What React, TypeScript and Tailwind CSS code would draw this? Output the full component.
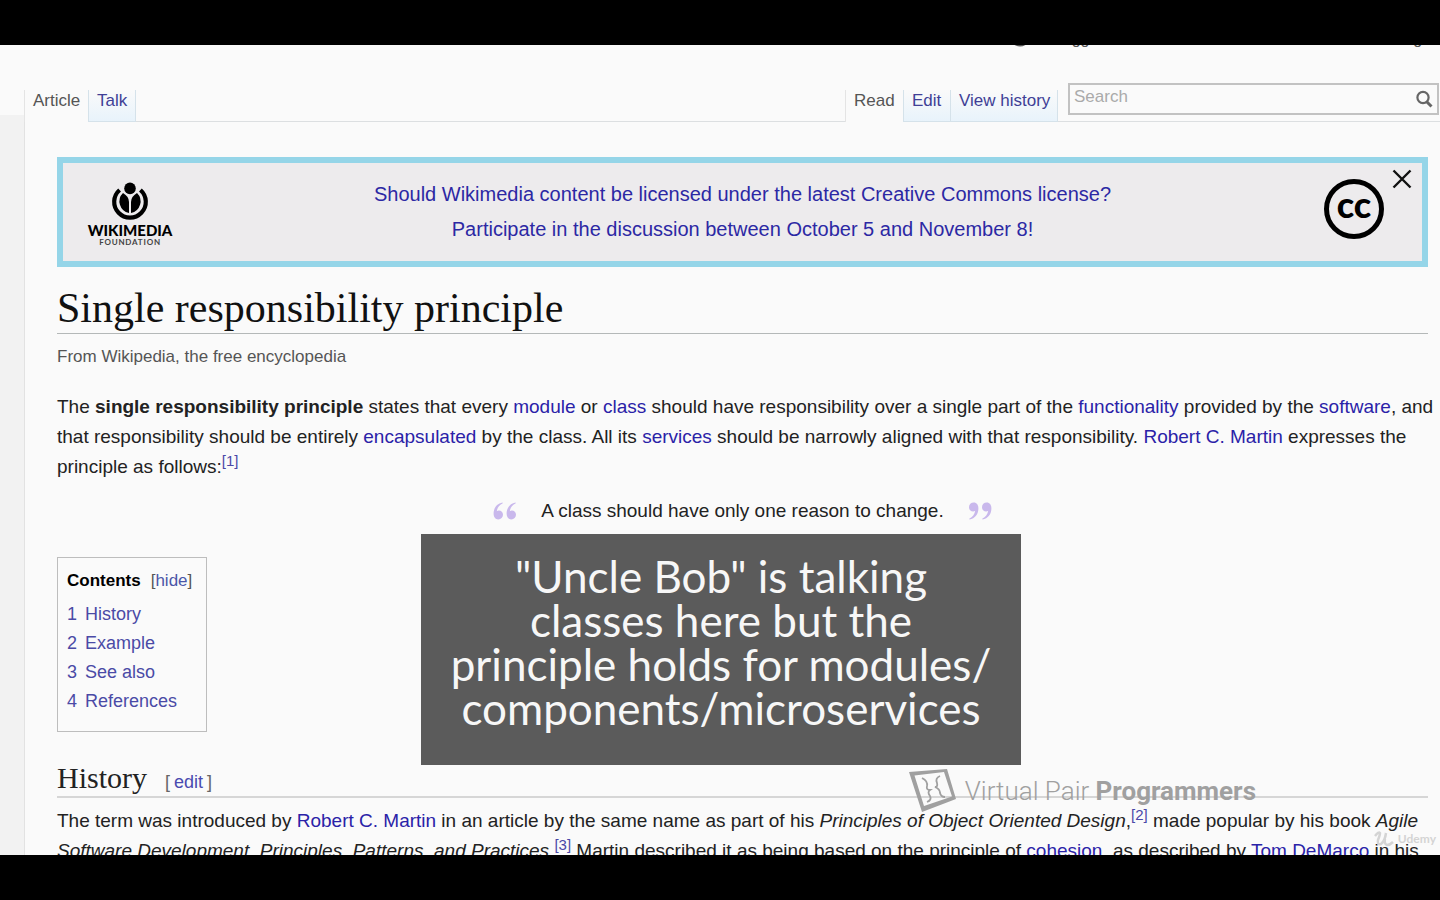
import type { ReactNode } from "react";

function WikiLink({ children }: { children: ReactNode }) {
  return (
    <a href="#" className="text-[#2a22a8]">
      {children}
    </a>
  );
}

function Ref({ n }: { n: number }) {
  return (
    <sup className="text-[15px] leading-none">
      <a href="#" className="text-[#4a48a8]">
        [{n}]
      </a>
    </sup>
  );
}

function WikimediaLogo() {
  return (
    <div className="flex w-24 flex-col items-center text-black">
      <svg viewBox="0 0 38 38" className="h-[38px] w-[38px]" aria-hidden="true">
        <circle cx="19" cy="6.4" r="5.8" />
        <path d="M8.6 8A15.8 15.8 0 1 0 29.4 8" fill="none" stroke="currentColor" strokeWidth="4.2" />
        <path d="M12 11 Q18 14.5 18 20 V31 A11.8 11.8 0 0 1 12 11Z" />
        <path d="M26 11 Q20 14.5 20 20 V31 A11.8 11.8 0 0 0 26 11Z" />
      </svg>
      <span className="mt-0.5 text-[15px] leading-4 font-black">WIKIMEDIA</span>
      <span className="text-[8px] leading-2 font-bold tracking-widest text-[#444]">FOUNDATION</span>
    </div>
  );
}

function Quote({ flip = false }: { flip?: boolean }) {
  return (
    <svg viewBox="0 0 24 18" className={flip ? "h-[18px] w-6 rotate-180" : "h-[18px] w-6"} fill="#c9b8ec" aria-hidden="true">
      <path d="M9.5 0.6 C4 1.6 0.6 6 0.6 11.6 C0.6 15.2 2.4 17.4 5.2 17.4 C8 17.4 10 15.5 10 12.8 C10 10.2 8.2 8.6 5.9 8.6 C5 8.6 4.4 8.8 3.8 9.2 C4.4 5.6 6.4 2.8 9.8 1.3Z" />
      <path d="M22.5 0.6 C17 1.6 13.6 6 13.6 11.6 C13.6 15.2 15.4 17.4 18.2 17.4 C21 17.4 23 15.5 23 12.8 C23 10.2 21.2 8.6 18.9 8.6 C18 8.6 17.4 8.8 16.8 9.2 C17.4 5.6 19.4 2.8 22.8 1.3Z" />
    </svg>
  );
}

function PageTabs() {
  return (
    <nav className="flex h-[39px] shrink-0 items-end text-[17px] text-[#555]">
      <span className="h-8 w-16 border-l border-[#e4e4e4] pl-2 leading-[22px]">Article</span>
      <a href="#" className="h-8 w-12 border border-t-0 border-[#d5e2ea] bg-linear-to-b from-[#fafafa] to-[#e8f3fb] pl-2 leading-[22px] text-[#403f96]">
        Talk
      </a>
      <span className="h-8 flex-1 border-b border-[#dcdfe1]" />
      <span className="h-8 w-[58px] border-l border-[#e4e4e4] pl-2 leading-[22px]">Read</span>
      <a href="#" className="h-8 w-[47px] border-b border-l border-[#d5e2ea] bg-linear-to-b from-[#fafafa] to-[#e8f3fb] pl-2 leading-[22px] text-[#403f96]">
        Edit
      </a>
      <a href="#" className="h-8 w-[108px] border border-t-0 border-[#d5e2ea] bg-linear-to-b from-[#fafafa] to-[#e8f3fb] pl-2 leading-[22px] whitespace-nowrap text-[#403f96]">
        View history
      </a>
      <form className="h-full w-[382px] border-b border-[#dcdfe1] pr-px pl-2.5">
        <div className="flex h-8 items-center border-2 border-[#c2c2c2] pr-1 pl-1">
          <input
            type="search"
            aria-label="Search"
            placeholder="Search"
            className="h-7 min-w-0 flex-1 bg-transparent pb-1 text-[17px] placeholder:text-[#aaa] focus:outline-none"
          />
          <button type="button" aria-label="Go">
            <svg viewBox="0 0 18 18" className="h-[18px] w-[18px]" fill="none" stroke="#666" strokeWidth="2.2">
              <circle cx="8" cy="7.5" r="5.6" />
              <path d="M11.5 11.5 L16.5 16.5" strokeWidth="3" />
            </svg>
          </button>
        </div>
      </form>
    </nav>
  );
}

function Banner() {
  return (
    <section className="mt-[35px] flex h-[110px] items-start border-[6px] border-[#95d5e8] bg-[#edebed] font-[Lato,sans-serif]">
      <div className="w-[116px] pt-[19px] pl-[19px]">
        <WikimediaLogo />
      </div>
      <a href="#" className="flex-1 pt-3.5 text-center font-['Liberation_Sans',sans-serif] text-xl leading-[35px] text-[#2c28a4]">
        Should Wikimedia content be licensed under the latest Creative Commons license?
        <br />
        Participate in the discussion between October 5 and November 8!
      </a>
      <div className="flex w-[116px] items-start justify-end gap-2 pr-2.5">
        <div className="mt-4 flex h-[60px] w-[60px] items-center justify-center rounded-full border-[5px] border-black">
          <span className="pb-2.5 text-[36px] leading-9 font-black text-black">cc</span>
        </div>
        <button type="button" aria-label="Close" className="mt-1.5">
          <svg viewBox="0 0 20 20" className="h-5 w-5" fill="none" stroke="#111" strokeWidth="2.4">
            <path d="M1.5 1.5 L18.5 18.5 M18.5 1.5 L1.5 18.5" />
          </svg>
        </button>
      </div>
    </section>
  );
}

const contents = ["History", "Example", "See also", "References"];

function Contents() {
  return (
    <nav aria-label="Contents" className="mt-[31px] h-[175px] w-[150px] border border-[#bdbdbd] px-[9px] pt-2 text-lg">
      <p className="flex items-center gap-2.5 text-[17px] leading-[30px] whitespace-nowrap">
        <b className="text-black">Contents</b>
        <span className="text-[#555]">
          [
          <button type="button" className="text-[#4a56a8]">
            hide
          </button>
          ]
        </span>
      </p>
      <ol className="pt-1">
        {contents.map((title, i) => (
          <li key={title} className="leading-[29px]">
            <a href="#" className="flex gap-2 text-[#4a4aa6]">
              <span>{i + 1}</span>
              <span>{title}</span>
            </a>
          </li>
        ))}
      </ol>
    </nav>
  );
}

function Article() {
  return (
    <main className="pr-3 pl-8">
      <Banner />
      <h1 className="mt-[18px] border-b border-[#b4b8b8] pb-0.5 font-['Liberation_Serif',serif] text-[42px] leading-[46px] text-[#111]">
        Single responsibility principle
      </h1>
      <p className="mt-2 text-[17px] leading-[30px] text-[#555]">From Wikipedia, the free encyclopedia</p>
      <p className="mt-5 text-[19px] leading-[30px] whitespace-nowrap">
        The <b>single responsibility principle</b> states that every <WikiLink>module</WikiLink> or{" "}
        <WikiLink>class</WikiLink> should have responsibility over a single part of the{" "}
        <WikiLink>functionality</WikiLink> provided by the <WikiLink>software</WikiLink>, and
        <br />
        that responsibility should be entirely <WikiLink>encapsulated</WikiLink> by the class. All its{" "}
        <WikiLink>services</WikiLink> should be narrowly aligned with that responsibility.{" "}
        <WikiLink>Robert C. Martin</WikiLink> expresses the
        <br />
        principle as follows:
        <Ref n={1} />
      </p>
      <blockquote className="mt-3.5 flex items-center justify-center gap-6 text-[19px] leading-[30px]">
        <Quote />
        A class should have only one reason to change.
        <Quote flip />
      </blockquote>
      <Contents />
      <h2 className="mt-7 flex items-baseline gap-[18px] border-b-2 border-[#d6d6d6] font-['Liberation_Serif',serif] text-[30px] leading-9 text-[#222]">
        History
        <span className="flex gap-1 font-['Liberation_Sans',sans-serif] text-lg leading-none text-[#666]">
          [
          <a href="#" className="text-[#4a4ab0]">
            edit
          </a>
          ]
        </span>
      </h2>
      <p className="mt-2 text-[19px] leading-[30px] whitespace-nowrap">
        The term was introduced by <WikiLink>Robert C. Martin</WikiLink> in an article by the same name as part of his{" "}
        <i>Principles of Object Oriented Design</i>,<Ref n={2} /> made popular by his book <i>Agile</i>
        <br />
        <i>Software Development, Principles, Patterns, and Practices</i>.<Ref n={3} /> Martin described it as being based
        on the principle of <WikiLink>cohesion</WikiLink>, as described by <WikiLink>Tom DeMarco</WikiLink> in his
      </p>
    </main>
  );
}

function Caption() {
  return (
    <div className="absolute top-[489px] left-1/2 h-[231px] w-[600px] -translate-x-[299px] bg-[#5b5b5b] pt-5 text-center font-[Lato,sans-serif] text-[44px] leading-11 text-[#f7f7f7]">
      "Uncle Bob" is talking
      <br />
      classes here but the
      <br />
      principle holds for modules/
      <br />
      components/microservices
    </div>
  );
}

function Watermark() {
  return (
    <div className="absolute right-[184px] bottom-[42px] flex items-center gap-2 font-[Roboto,sans-serif] text-[26px] leading-[44px] text-[#a0a0a0]">
      <svg viewBox="0 0 48 44" className="h-11 w-12" fill="none" stroke="currentColor" aria-hidden="true">
        <path fill="currentColor" stroke="none" fillRule="evenodd" d="M0 3 L38 0 L47 30 L13 43Z M5.5 6.5 L15 37 L43 27.5 L35 3Z" />
        <path d="M13 9 Q19 12 18 17 Q17 21 21 21 Q18 23 21 27 Q23 31 18 33" strokeWidth="1.8" />
        <path d="M31 7 Q26 9 28 14 Q29 18 26 18 Q31 20 31 24 Q32 28 36 28" strokeWidth="1.8" />
      </svg>
      <span className="font-light">
        Virtual Pair <b className="font-bold">Programmers</b>
      </span>
    </div>
  );
}

function UdemyMark() {
  return (
    <div className="absolute right-1 bottom-2 flex items-center gap-1 font-[Lato,sans-serif] text-xs leading-4 font-bold text-[#d4d4d4]">
      <svg viewBox="0 0 20 16" className="h-4 w-5" fill="none" stroke="currentColor" strokeWidth="2.5" aria-hidden="true">
        <path d="M1 5 Q5 0 6 2 Q6 4 4 9 Q3 14 7 13 Q11 10 12 2 M12 2 Q9 13 13 14 Q16 14 19 11" />
      </svg>
      Udemy
    </div>
  );
}

function UserBar() {
  return (
    <div className="-mt-4 flex h-[54px] shrink-0 items-start justify-end gap-2.5 pr-px text-base leading-5 text-[#555]">
      <span className="flex items-center gap-0.5">
        <svg viewBox="0 0 16 20" className="h-5 w-4" fill="#555" aria-hidden="true">
          <circle cx="8" cy="6" r="4" />
          <path d="M1 12 Q8 8 15 12 V15 Q8 20 1 15Z" />
        </svg>
        Not logged in
      </span>
      <span>Talk</span>
      <span>Contributions</span>
      <span>Create account</span>
      <span>Log in</span>
    </div>
  );
}

export default function App() {
  return (
    <div className="flex h-screen flex-col bg-black font-['Liberation_Sans',Arial,sans-serif] text-lg text-[#222]">
      <div className="h-[45px] shrink-0" />
      <div className="relative flex min-h-0 flex-1 overflow-hidden bg-[#fafafa]">
        <aside className="w-6 shrink-0 pt-[70px]">
          <div className="h-full bg-[#f2f2f2]" />
        </aside>
        <div className="flex min-w-0 flex-1 flex-col">
          <UserBar />
          <PageTabs />
          <div className="flex-1 border-l border-[#e2e2e2]">
            <Article />
          </div>
        </div>
        <Caption />
        <Watermark />
        <UdemyMark />
      </div>
      <div className="h-[45px] shrink-0" />
    </div>
  );
}
